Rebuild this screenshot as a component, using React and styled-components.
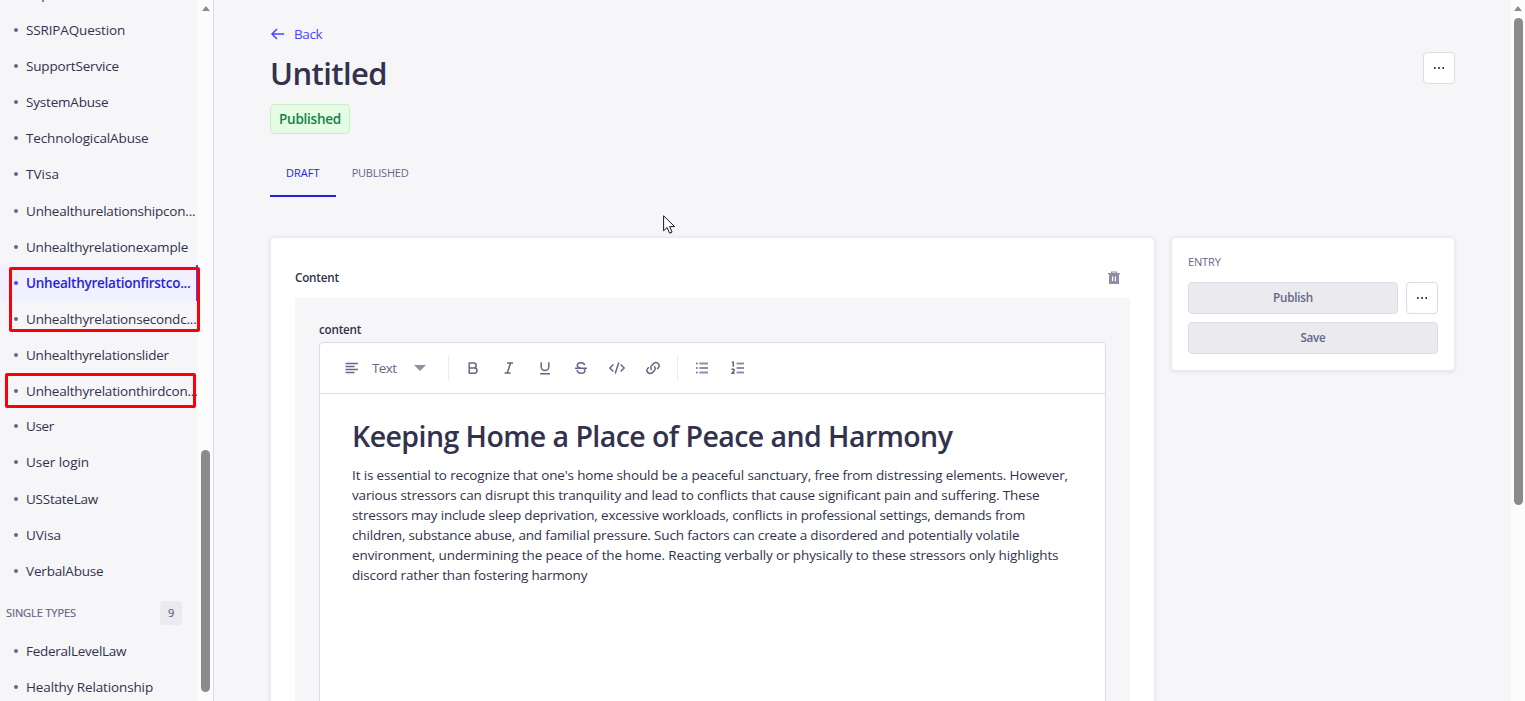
import React from 'react';
import styled, { createGlobalStyle } from 'styled-components';

const c = {
  bg: '#f6f6f9', line: '#dcdce4', soft: '#eaeaef', text: '#32324d', muted: '#666687',
  icon: '#8e8ea9', blue: '#4945ff', deep: '#271fe0', tint: '#f0f0ff',
};

const Global = createGlobalStyle`
  * { box-sizing: border-box; }
  body { margin: 0; background: ${c.bg}; overflow: hidden; }
  h1, h2, p { margin: 0; }
`;

const Page = styled.div`
  display: flex;
  position: relative;
  width: 1525px;
  height: 701px;
  overflow: hidden;
  background: ${c.bg};
  color: ${c.text};
  font-family: "Open Sans", "Noto Sans", sans-serif;
  font-size: 13.5px;
  letter-spacing: -0.2px;
`;

const Sidebar = styled.aside`
  display: flex;
  flex: 0 0 214px;
  height: 701px;
  border-right: 1px solid ${c.line};
`;

const NavList = styled.nav`
  flex: 0 0 198px;
  margin-top: -24px;
`;

const NavItem = styled.div`
  display: flex;
  align-items: center;
  height: 36px;
  margin-top: ${p => p.$shift || 0}px;
  padding-left: 14px;
  white-space: nowrap;
  letter-spacing: ${p => p.$track ?? -0.2}px;
  color: ${p => (p.$active ? c.deep : c.text)};
  font-weight: ${p => (p.$active ? 600 : 400)};
  background: ${p => (p.$active ? c.tint : 'transparent')};
  border-right: ${p => (p.$active ? `2px solid ${c.blue}` : '0')};
  &::before {
    content: "";
    flex: none;
    width: 4px;
    height: 4px;
    margin-right: 8px;
    border-radius: 50%;
    background: ${p => (p.$active ? c.blue : c.muted)};
  }
`;

const GroupHead = styled.div`
  display: flex;
  align-items: center;
  justify-content: space-between;
  height: 24px;
  margin: 12px 16px 8px 6px;
  color: ${c.muted};
  font-size: 11px;
  line-height: 14px;
  -webkit-text-stroke: 0.2px;
  letter-spacing: -0.1px;
`;

const Count = styled.span`
  width: 22px;
  height: 24px;
  border-radius: 4px;
  background: ${c.soft};
  line-height: 24px;
  text-align: center;
`;

const Track = styled.div`
  display: flex;
  flex-direction: column;
  align-items: center;
  flex: 0 0 ${p => p.$width}px;
  height: 701px;
  padding-top: 6px;
  background: #fcfcfc;
`;

const Arrow = styled.i`
  border: 4.5px solid transparent;
  border-top: 0;
  border-bottom: 5px solid #8b8b8b;
`;

const Thumb = styled.div`
  width: 9px;
  height: ${p => p.$height}px;
  margin-top: ${p => p.$gap}px;
  border-radius: 5px;
  background: #8b8b8b;
`;

const Main = styled.main`
  flex: 1;
  padding: 24px 56px 0;
`;

const Back = styled.a`
  display: flex;
  align-items: center;
  gap: 8px;
  height: 20px;
  color: ${c.blue};
  letter-spacing: -0.4px;
`;

const TitleRow = styled.header`
  display: flex;
  justify-content: space-between;
  align-items: flex-start;
  height: 60px;
  padding-top: 8px;
`;

const Title = styled.h1`
  margin-top: 1px;
  font-size: 31px;
  line-height: 40px;
  font-weight: 600;
  letter-spacing: -0.6px;
`;

const Status = styled.div`
  display: inline-block;
  height: 30px;
  padding: 0 8px;
  border: 1px solid #c6f0c2;
  border-radius: 4px;
  background: #e4fce4;
  color: #188048;
  font-size: 13.5px;
  font-weight: 600;
  letter-spacing: -0.24px;
  line-height: 28px;
`;

const Tabs = styled.div`
  display: flex;
  height: 48px;
  margin-top: 15px;
`;

const Tab = styled.div`
  height: 48px;
  padding: 0 16px;
  border-bottom: 2px solid ${p => (p.$active ? c.deep : 'transparent')};
  color: ${p => (p.$active ? c.deep : c.muted)};
  font-size: 11px;
  font-weight: 500;
  letter-spacing: ${p => (p.$active ? 0.03 : -0.22)}px;
  line-height: 48px;
`;

const Columns = styled.div`
  display: flex;
  align-items: flex-start;
  gap: 16px;
  margin-top: 40px;
`;

const Card = styled.section`
  border: 1px solid ${c.soft};
  border-radius: 4px;
  background: #fff;
  box-shadow: 0 1px 4px rgba(26, 26, 67, 0.1);
`;

const ContentCard = styled(Card)`
  width: 885px;
  height: 520px;
  padding: 30px 24px 0;
`;

const EntryCard = styled(Card)`
  width: 284px;
  height: 134px;
  padding: 16px;
`;

const ZoneHead = styled.div`
  display: flex;
  align-items: center;
  justify-content: space-between;
  height: 20px;
  padding-right: 9px;
`;

const Label = styled.div`
  height: 20px;
  font-size: 11.7px;
  font-weight: 600;
  line-height: 18px;
  letter-spacing: -0.22px;
`;

const Zone = styled.div`
  height: 470px;
  margin-top: 10px;
  padding: 22px 24px 0;
  background: ${c.bg};
`;

const Editor = styled.div`
  height: 420px;
  margin-top: 2px;
  border: 1px solid ${c.line};
  border-radius: 4px;
  background: #fff;
`;

const Toolbar = styled.div`
  display: flex;
  align-items: center;
  height: 51px;
  padding-left: 24px;
  border-bottom: 1px solid ${c.line};
`;

const BlockSelect = styled.div`
  display: flex;
  align-items: center;
  width: 104px;
  color: ${c.muted};
`;

const BlockName = styled.span`
  width: 42px;
  margin-left: 12px;
  letter-spacing: -0.6px;
`;

const Tools = styled.div`
  display: flex;
  gap: 4px;
  height: 24px;
  align-items: center;
  margin-right: ${p => p.$end || 0}px;
  padding-left: 8px;
  border-left: 1px solid ${c.soft};
`;

const Tool = styled.button`
  display: grid;
  place-items: center;
  width: 32px;
  height: 32px;
  padding: 0;
  border: 0;
  background: none;
  color: ${c.muted};
`;

const Document = styled.article`
  padding: 23px 32px 0;
  h2 {
    font-size: 28.5px;
    font-weight: 600;
    line-height: 38px;
    letter-spacing: -0.56px;
    white-space: nowrap;
  }
  p { margin-top: 10px; line-height: 20px; white-space: nowrap; }
`;

const Line = styled.span`
  display: block;
  letter-spacing: ${p => p.$track}px;
`;

const EntryTitle = styled.div`
  height: 16px;
  color: ${c.muted};
  font-size: 11px;
  font-weight: 500;
  line-height: 16px;
  letter-spacing: -0.15px;
`;

const Actions = styled.div`
  display: flex;
  flex-wrap: wrap;
  gap: 8px;
  margin-top: 12px;
`;

const Button = styled.button`
  width: ${p => p.$width}px;
  height: 32px;
  padding: 0 0 2px;
  border: 1px solid ${c.line};
  border-radius: 4px;
  background: ${c.soft};
  color: ${c.muted};
  font: 600 11.7px "Open Sans", sans-serif;
  letter-spacing: -0.25px;
`;

const More = styled.button`
  display: grid;
  place-items: center;
  width: 32px;
  height: 32px;
  padding: 0;
  border: 1px solid ${c.line};
  border-radius: 4px;
  background: #fff;
`;

const Highlight = styled.div`
  position: absolute;
  left: ${p => p.$x}px;
  top: ${p => p.$y}px;
  width: 191px;
  height: ${p => p.$h}px;
  border: 3px solid #fb0007;
  border-radius: 2px;
`;

const Cursor = styled.svg`
  position: absolute;
  left: 663px;
  top: 215px;
`;

const Dots = () => (
  <svg width="12" height="2" fill={c.text}>
    <rect x="1" width="1.6" height="2" /><rect x="5.2" width="1.6" height="2" /><rect x="9.4" width="1.6" height="2" />
  </svg>
);

const icons = {
  bold: <path d="M4.2 3h4.6a2.4 2.4 0 0 1 0 4.9H4.2zM4.2 7.9h5.2a2.6 2.6 0 0 1 0 5.3H4.2z" />,
  italic: <path d="M6 3h6M3.6 13h6M9.6 3 6.2 13" />,
  underline: <path d="M4.2 2.2v4.6a3.8 3.8 0 0 0 7.600 0V2.200M3.200 13.700h9.800" />,
  strike: <path d="M2 8.200h12M11.600 5.200C11.300 3.600 9.900 2.800 8 2.800c-2.200 0-3.700 1.100-3.700 2.700 0 1.400 1 2.100 3.700 2.700M4.100 10.200c.2 1.900 1.700 3 3.900 3s3.900-1.100 3.900-2.800c0-1-.4-1.600-1.100-2.100" />,
  code: <path d="m4.400 4.500-3.600 3.500 3.600 3.500M11.600 4.500l3.600 3.500-3.600 3.500M9.800 2.600 6.200 13.400" />,
  link: <path d="M6.700 9.900a3.100 3.100 0 0 1 0-4.400l1.900-1.900a3.100 3.100 0 0 1 4.500 4.400l-1 1M9.300 6.300a3.100 3.100 0 0 1 0 4.400l-1.900 1.900a3.100 3.100 0 0 1-4.500-4.400l1-1" />,
  bullets: <><path d="M2 3.500h1.700M2 8h1.700M2 12.500h1.700" /><path stroke={c.icon} strokeWidth="1.800" d="M5.400 3.500H14M5.400 8H14M5.400 12.500H14" /></>,
  numbers: <><path stroke={c.icon} strokeWidth="1.800" d="M6.600 3.500H14M6.600 8H14M6.600 12.500H14" /><path d="M1.900 2.600 3.300 2v4.700M1.700 9.700c.8-1 2.600-.6 2.600.5 0 .9-1.200 1.700-2.500 3h2.900" /></>,
};

const Icon = ({ name }) => (
  <svg width="16" height="16" viewBox="0 0 16 16" fill="none" stroke="currentColor" strokeWidth="1.500" strokeLinejoin="round">
    {icons[name]}
  </svg>
);

const items = [
  { name: 'Supervision' },
  { name: 'SSRIPAQuestion', track: -0.14 },
  { name: 'SupportService', track: -0.17 },
  { name: 'SystemAbuse', track: -0.19 },
  { name: 'TechnologicalAbuse', track: -0.13 },
  { name: 'TVisa', track: 0.04 },
  { name: 'Unhealthurelationshipcon...', track: -0.2, shift: 1 },
  { name: 'Unhealthyrelationexample', track: -0.22 },
  { name: 'Unhealthyrelationfirstco...', track: -0.25, active: true },
  { name: 'Unhealthyrelationsecondc...', track: -0.19 },
  { name: 'Unhealthyrelationslider', track: -0.22 },
  { name: 'Unhealthyrelationthirdcon...', track: -0.2 },
  { name: 'User', track: -0.33, shift: -1 },
  { name: 'User login', track: -0.04 },
  { name: 'USStateLaw', track: -0.24, shift: 1 },
  { name: 'UVisa', track: -0.04 },
  { name: 'VerbalAbuse', track: -0.17 },
];

const lines = [
  ["It is essential to recognize that one's home should be a peaceful sanctuary, free from distressing elements. However,", -0.138],
  ['various stressors can disrupt this tranquility and lead to conflicts that cause significant pain and suffering. These', -0.137],
  ['stressors may include sleep deprivation, excessive workloads, conflicts in professional settings, demands from', -0.168],
  ['children, substance abuse, and familial pressure. Such factors can create a disordered and potentially volatile', -0.163],
  ['environment, undermining the peace of the home. Reacting verbally or physically to these stressors only highlights', -0.114],
  ['discord rather than fostering harmony', -0.17],
];

export default function App() {
  return (
    <Page>
      <Global />
      <Sidebar>
        <NavList>
          {items.map(i => (
            <NavItem key={i.name} $track={i.track} $shift={i.shift} $active={i.active}>{i.name}</NavItem>
          ))}
          <GroupHead>SINGLE TYPES<Count>9</Count></GroupHead>
          <NavItem $track={-0.26}>FederalLevelLaw</NavItem>
          <NavItem $track={-0.13}>Healthy Relationship</NavItem>
        </NavList>
        <Track $width={15}><Arrow /><Thumb $gap={439} $height={242} /></Track>
      </Sidebar>
      <Main>
        <Back>
          <svg width="16" height="16" viewBox="0 0 16 16" fill="none" stroke="currentColor" strokeWidth="1.500">
            <path d="M14.200 8H2.200M7 3 2 8l5 5" />
          </svg>
          Back
        </Back>
        <TitleRow>
          <Title>Untitled</Title>
          <More><Dots /></More>
        </TitleRow>
        <Status>Published</Status>
        <Tabs><Tab $active>DRAFT</Tab><Tab>PUBLISHED</Tab></Tabs>
        <Columns>
          <ContentCard>
            <ZoneHead>
              <Label>Content</Label>
              <svg width="14" height="14" fill={c.icon}>
                <path fillRule="evenodd" d="M4 2V.5h6V2h3v1.300h-1V13H2V3.300H1V2zM5.200 2h3.600v-.6H5.200zM5 5.500v4.500h1.200V5.500zM7.800 5.500v4.500H9V5.500z" />
              </svg>
            </ZoneHead>
            <Zone>
              <Label>content</Label>
              <Editor>
                <Toolbar>
                  <BlockSelect>
                    <svg width="16" height="16" stroke="currentColor" strokeWidth="1.700">
                      <path d="M1.500 3.500h12.500M1.500 6.500h9M1.500 9.500h12.500M1.500 12.500h9" />
                    </svg>
                    <BlockName>Text</BlockName>
                    <svg width="12" height="6" fill={c.icon}><path d="M0 0h12L6 6z" /></svg>
                  </BlockSelect>
                  <Tools $end={8}>
                    {['bold', 'italic', 'underline', 'strike', 'code', 'link'].map(n => <Tool key={n}><Icon name={n} /></Tool>)}
                  </Tools>
                  <Tools>
                    {['bullets', 'numbers'].map(n => <Tool key={n}><Icon name={n} /></Tool>)}
                  </Tools>
                </Toolbar>
                <Document>
                  <h2>Keeping Home a Place of Peace and Harmony</h2>
                  <p>{lines.map(([t, track]) => <Line key={t} $track={track}>{t} </Line>)}</p>
                </Document>
              </Editor>
            </Zone>
          </ContentCard>
          <EntryCard>
            <EntryTitle>ENTRY</EntryTitle>
            <Actions>
              <Button $width={210}>Publish</Button>
              <More><Dots /></More>
              <Button $width={250}>Save</Button>
            </Actions>
          </EntryCard>
        </Columns>
      </Main>
      <Track $width={14}><Arrow /><Thumb $gap={7} $height={487} /></Track>
      <Highlight $x={9} $y={267} $h={65} />
      <Highlight $x={5} $y={373} $h={35} />
      <Cursor width="13" height="20" viewBox="0 0 13 20">
        <path d="M.6.8v15l3.500-3.300 2.500 5.700 2.500-1.100-2.500-5.500h5z" fill="#fff" stroke="#15152a" />
      </Cursor>
    </Page>
  );
}
